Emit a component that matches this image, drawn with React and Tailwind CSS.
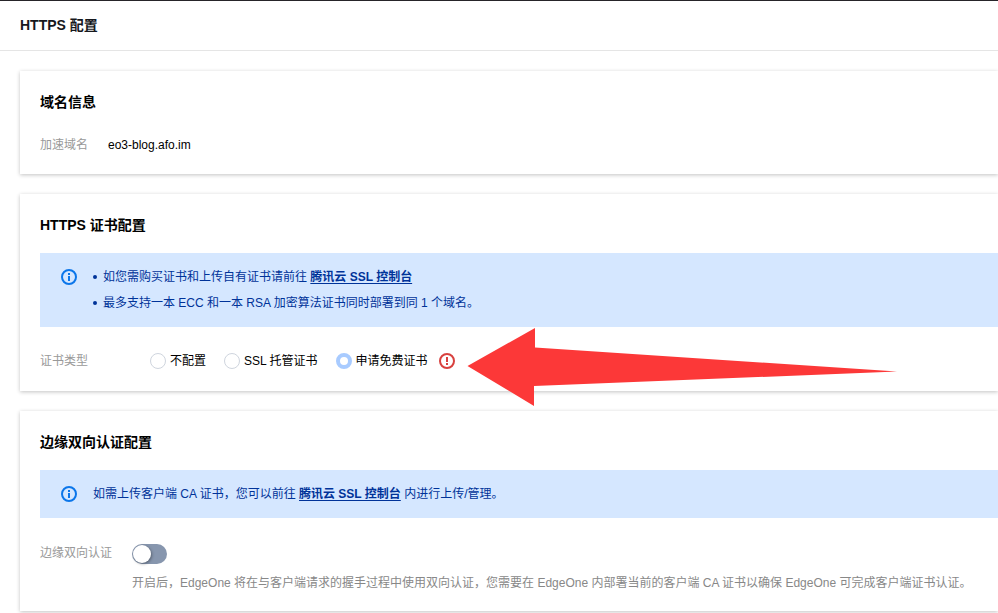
import { useState } from "react";

function InfoIcon() {
  return (
    <svg className="mt-px size-4 shrink-0" viewBox="0 0 16 16" fill="none" aria-hidden="true">
      <circle cx="8" cy="8" r="7" stroke="#0b76ea" strokeWidth="2" />
      <rect x="7" y="4" width="2" height="2" fill="#0b76ea" />
      <rect x="7" y="7" width="2" height="5" fill="#0b76ea" />
    </svg>
  );
}

function WarningIcon() {
  return (
    <svg className="size-4" viewBox="0 0 16 16" fill="none" aria-hidden="true">
      <circle cx="8" cy="8" r="7" stroke="#d8413f" strokeWidth="2" />
      <rect x="7" y="4" width="2" height="5" fill="#d8413f" />
      <rect x="7" y="10" width="2" height="2" fill="#d8413f" />
    </svg>
  );
}

function Card({ title, className = "", children }) {
  return (
    <section className={`bg-white pt-5 pl-5 shadow-[0_1px_4px_0_rgba(0,0,0,0.24)] ${className}`}>
      <h2 className="text-sm leading-[22px] font-bold text-black">{title}</h2>
      {children}
    </section>
  );
}

function Notice({ children }) {
  return (
    <div className="mt-[17px] flex gap-4 bg-[#d5e7ff] py-[15px] pl-[21px] leading-[18px] text-[#003399]">
      <InfoIcon />
      {children}
    </div>
  );
}

function ConsoleLink() {
  return (
    <a href="#ssl" className="font-bold underline underline-offset-2">
      腾讯云 SSL 控制台
    </a>
  );
}

const certificateTypes = [
  { id: "none", label: "不配置" },
  { id: "hosted", label: "SSL 托管证书" },
  { id: "free", label: "申请免费证书" },
];

export default function App() {
  const [certificate, setCertificate] = useState("free");
  const [mutual, setMutual] = useState(false);

  return (
    <div className="overflow-x-hidden bg-white font-['Liberation_Sans','Noto_Sans_CJK_SC',sans-serif] text-xs text-black">
      <header className="flex h-[51px] items-center border-t border-b border-t-[#262429] border-b-[#e5e5e5] px-5 pb-[2px]">
        <h1 className="text-sm leading-[22px] font-bold text-[#16181d]">HTTPS 配置</h1>
      </header>

      <main className="flex flex-col gap-5 py-5 pl-5">
        <Card title="域名信息" className="pb-[19px]">
          <dl className="mt-[22px] flex gap-5 leading-5">
            <dt className="text-[#999999]">加速域名</dt>
            <dd>eo3-blog.afo.im</dd>
          </dl>
        </Card>

        <Card title="HTTPS 证书配置" className="pb-4">
          <Notice>
            <ul className="flex flex-col gap-2">
              <li className="flex items-center gap-[6px]">
                <span className="size-1 rounded-full bg-[#003399]" />
                <span>
                  如您需购买证书和上传自有证书请前往 <ConsoleLink />
                </span>
              </li>
              <li className="flex items-center gap-[6px]">
                <span className="size-1 rounded-full bg-[#003399]" />
                <span>最多支持一本 ECC 和一本 RSA 加密算法证书同时部署到同 1 个域名。</span>
              </li>
            </ul>
          </Notice>

          <fieldset className="mt-5 flex h-7 items-center">
            <legend className="float-left w-[110px] text-[#999999]">证书类型</legend>
            <div className="flex items-center gap-[18px]">
              {certificateTypes.map(({ id, label }) => (
                <label key={id} className="flex items-center gap-1">
                  <input
                    type="radio"
                    name="certificate"
                    value={id}
                    checked={certificate === id}
                    onChange={() => setCertificate(id)}
                    className="size-4 appearance-none rounded-full border border-[#cfd5de] bg-white checked:border-4 checked:border-[#a8cbff]"
                  />
                  {label}
                </label>
              ))}
            </div>
            <span className="relative ml-[11px]">
              <WarningIcon />
              <svg
                className="pointer-events-none absolute -top-[25px] left-7 h-[78px] w-[430px] max-w-none"
                viewBox="0 0 430 78"
                aria-hidden="true"
              >
                <path d="M0.5 38 68 0V19.5L430 43.5 67 58V78Z" fill="#fc3838" />
              </svg>
            </span>
          </fieldset>
        </Card>

        <Card title="边缘双向认证配置" className="pb-[18px]">
          <Notice>
            <p>
              如需上传客户端 CA 证书，您可以前往 <ConsoleLink /> 内进行上传/管理。
            </p>
          </Notice>

          <div className="mt-[25px] flex gap-5 leading-5">
            <label htmlFor="mutual" className="shrink-0 text-[#999999]">
              边缘双向认证
            </label>
            <div>
              <button
                id="mutual"
                type="button"
                role="switch"
                aria-checked={mutual}
                onClick={() => setMutual(!mutual)}
                className="mt-px flex h-5 w-[35px] items-center rounded-full bg-[#8796ae] p-px aria-checked:justify-end aria-checked:bg-[#006eff]"
              >
                <span className="size-[18px] rounded-full bg-white shadow-[1px_1px_3px_rgba(0,0,0,0.35)]" />
              </button>
              <p className="mt-[9px] text-[#888888]">
                开启后，EdgeOne 将在与客户端请求的握手过程中使用双向认证，您需要在 EdgeOne 内部署当前的客户端 CA 证书以确保 EdgeOne 可完成客户端证书认证。
              </p>
            </div>
          </div>
        </Card>
      </main>
    </div>
  );
}
